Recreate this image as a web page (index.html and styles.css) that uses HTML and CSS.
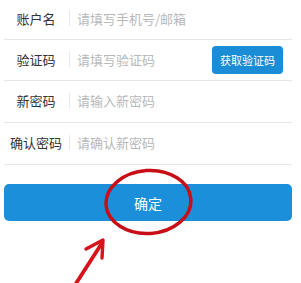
FILE: index.html
```html
<!DOCTYPE html>
<html lang="zh-CN">

<head>
    <meta charset="UTF-8">
    <meta name="viewport" content="width=device-width, initial-scale=1.0">
    <title>找回密码</title>
    <link rel="stylesheet" href="styles.css">
</head>

<body>
    <div class="page">
        <form class="form">
            <div class="row">
                <label class="label">账户名</label>
                <span class="divider"></span>
                <input class="field" type="text" placeholder="请填写手机号/邮箱">
            </div>
            <div class="row">
                <label class="label">验证码</label>
                <span class="divider"></span>
                <input class="field" type="text" placeholder="请填写验证码">
                <button class="code-btn" type="button">获取验证码</button>
            </div>
            <div class="row">
                <label class="label">新密码</label>
                <span class="divider"></span>
                <input class="field" type="password" placeholder="请输入新密码">
            </div>
            <div class="row">
                <label class="label">确认密码</label>
                <span class="divider"></span>
                <input class="field" type="password" placeholder="请确认新密码">
            </div>
            <button class="submit-btn" type="button">确定</button>
        </form>

        <!-- red annotation drawn over the screenshot -->
        <svg class="mark" width="301" height="283" viewBox="0 0 301 283">
            <ellipse cx="148.5" cy="202" rx="42.5" ry="31.5" fill="none" stroke="#c80f18" stroke-width="3.5"
                transform="rotate(-4 148.5 202)" />
            <path d="M75 285 L102 243" fill="none" stroke="#d8121b" stroke-width="3.8" stroke-linecap="round" />
            <path d="M86 249 L103 240 L102 258" fill="none" stroke="#d8121b" stroke-width="3.4"
                stroke-linecap="round" stroke-linejoin="round" />
        </svg>
    </div>
</body>

</html>
```

FILE: styles.css
```css
body {
    margin: 0;
    background-color: #fff;
    font-family: "Noto Sans CJK SC", "Noto Sans", sans-serif;
}

.page {
    position: relative;
    width: 301px;
    height: 283px;
    overflow: hidden;
}

.form {
    padding: 0 9px 0 4px;
}

.row {
    display: flex;
    align-items: center;
    height: 42px;
    padding-bottom: 2px;
    box-sizing: border-box;
    border-bottom: 1px solid #e6e6e6;
}

.row:first-child {
    height: 40px;
}

.row:nth-child(2) {
    height: 41px;
}

.label {
    width: 64px;
    text-align: center;
    font-size: 13px;
    color: #333;
}

.divider {
    width: 1px;
    height: 15px;
    background-color: #e8e8e8;
    margin-left: 1px;
}

.field {
    flex: 1;
    min-width: 0;
    border: none;
    outline: none;
    padding: 0 0 0 7px;
    font-family: inherit;
    font-size: 13px;
    color: #333;
    background: transparent;
}

.field::placeholder {
    color: #b8b8b8;
}

.code-btn {
    width: 71px;
    height: 28px;
    margin-right: 9px;
    margin-top: 2px;
    border: none;
    border-radius: 4px;
    background-color: #1a8dd6;
    color: #fff;
    font-family: inherit;
    font-size: 11px;
    padding: 0;
}

.submit-btn {
    display: block;
    width: 100%;
    height: 37px;
    margin-top: 19px;
    border: none;
    border-radius: 5px;
    background-color: #1b8fd9;
    color: #fff;
    font-family: inherit;
    font-size: 14px;
    padding: 0;
}

.mark {
    position: absolute;
    left: 0;
    top: 0;
    pointer-events: none;
}
```
